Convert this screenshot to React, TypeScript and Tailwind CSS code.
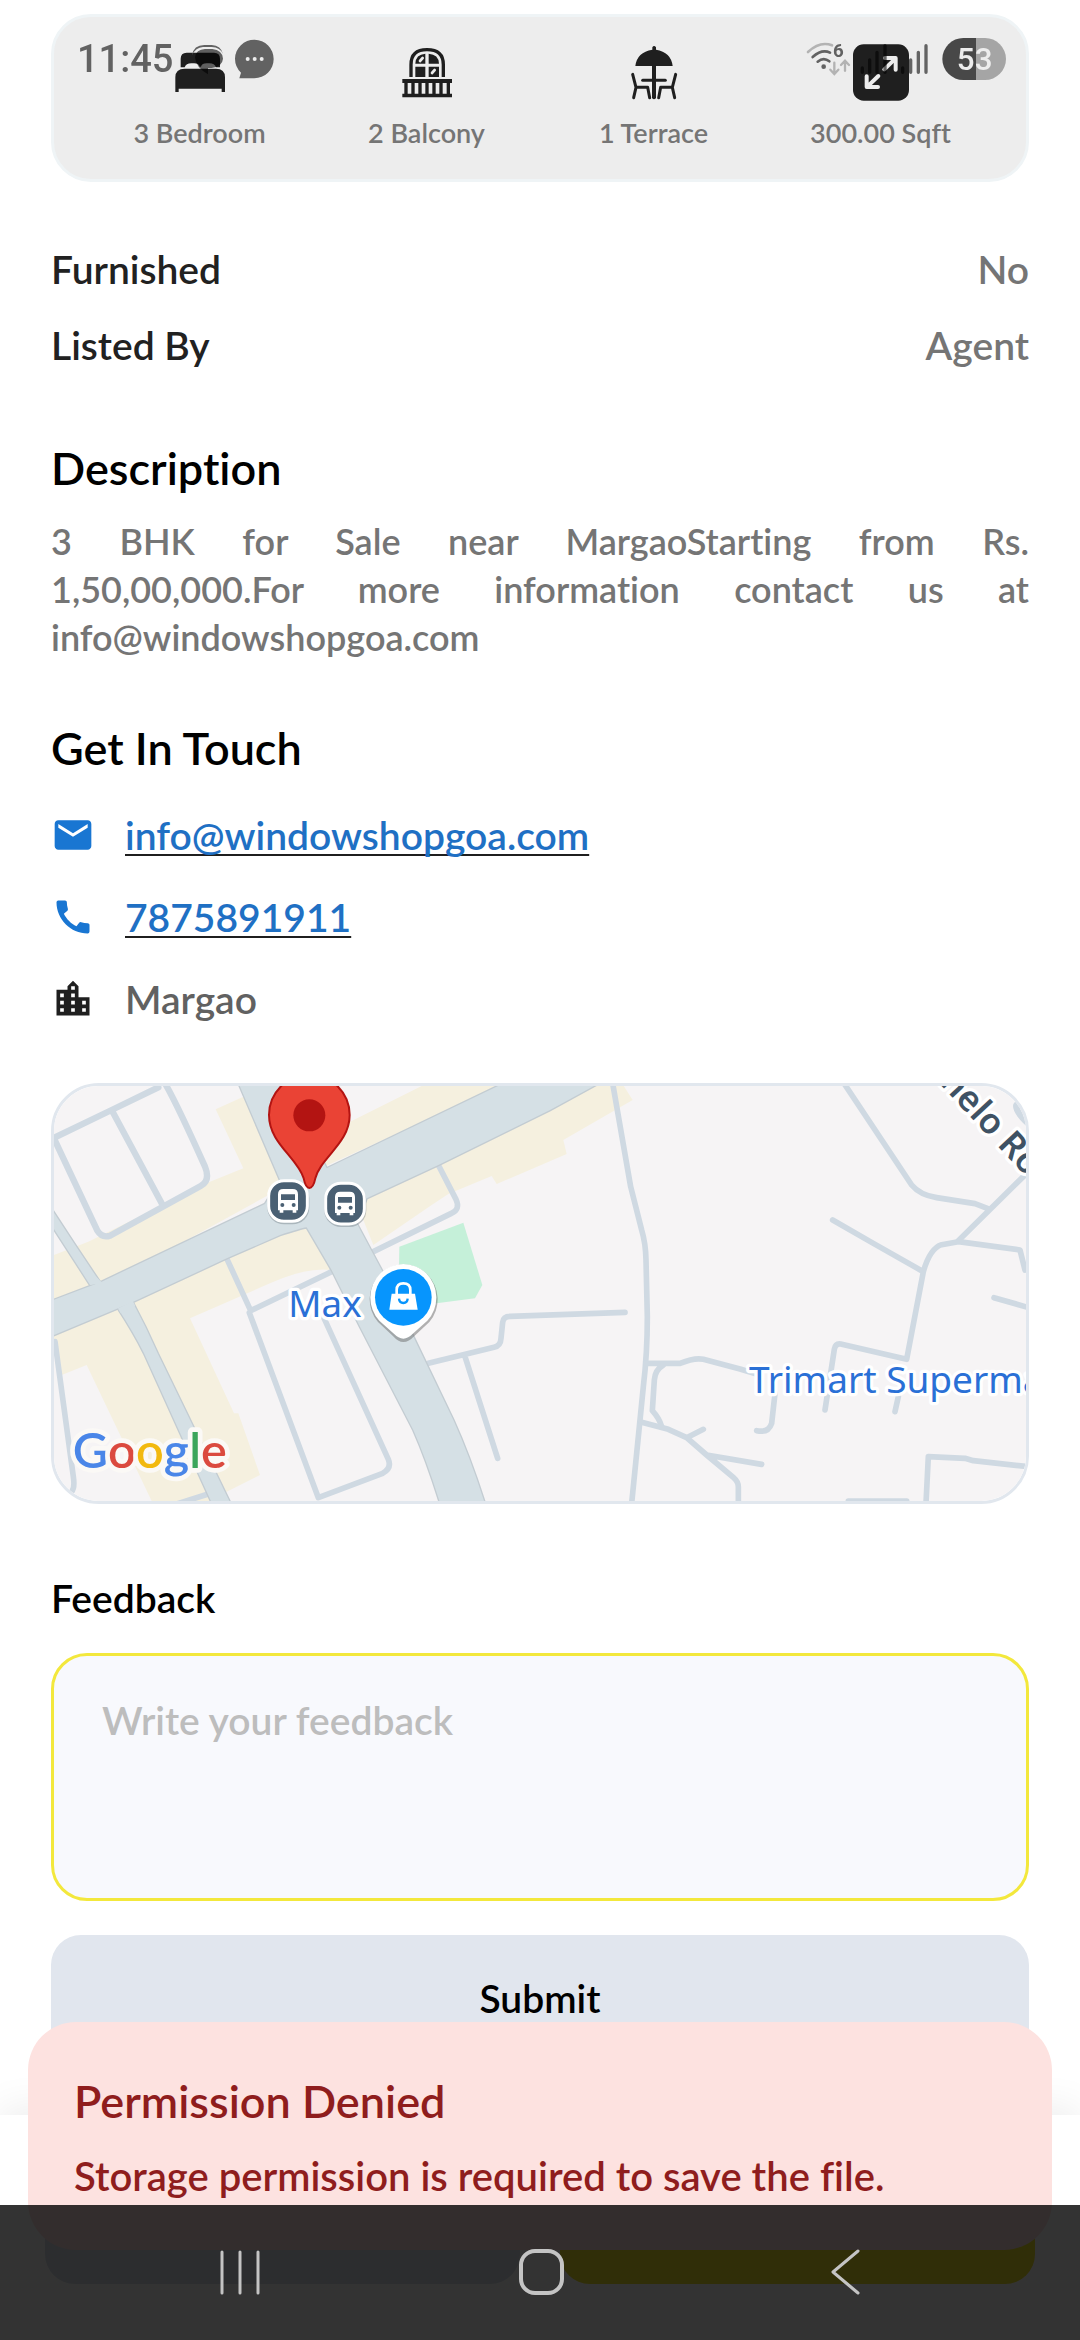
import type { ReactNode } from "react";
import { MdCall, MdEmail, MdLocationCity } from "react-icons/md";

function BedIcon() {
  return (
    <svg viewBox="38 48 168 168" className="size-14 overflow-visible" fill="#1f1f1f" aria-hidden="true">
      <path d="M64 112 V86 Q64 68 82 68 H164 Q182 68 182 86 V112 H170 Q166 100 150 100 H142 Q128 100 125 110 H121 Q118 100 104 100 H96 Q80 100 76 112Z" />
      <path d="M48 186 V142 Q48 116 76 116 H170 Q197 116 197 142 V186 H187 V176 H58 V186Z" />
    </svg>
  );
}

function BalconyIcon() {
  return (
    <svg viewBox="26 18 168 168" className="size-14 overflow-visible" fill="#1f1f1f" aria-hidden="true">
      <path d="M62 111 V74 Q62 29 110 29 Q159 29 159 74 V111" fill="none" stroke="#1f1f1f" strokeWidth="10" />
      <path d="M75 71 Q76 43 105 41 V71Z M115 41 Q145 43 146 71 H115Z M75 80 H105 V111 H75Z M115 80 H146 V111 H115Z" />
      <path d="M89 63 L97 54 M125 99 L133 90" stroke="#ededed" strokeWidth="8" strokeLinecap="round" />
      <path d="M36 117 H185 V129 H36Z M36 161 H185 V172 H36Z" />
      <path d="M47 128 V162 M68 128 V162 M89 128 V162 M110 128 V162 M131 128 V162 M152 128 V162 M174 128 V162" stroke="#1f1f1f" strokeWidth="10" />
    </svg>
  );
}

function TerraceIcon() {
  return (
    <svg viewBox="705 18 168 168" className="size-14 overflow-visible" fill="none" stroke="#1f1f1f" strokeWidth="9" strokeLinecap="round" strokeLinejoin="round" aria-hidden="true">
      <path d="M733 78 Q738 36 784 29 V22 Q789 14 795 22 V29 Q840 36 845 78Z" fill="#1f1f1f" stroke="none" />
      <path d="M789 76 V172" strokeWidth="12" />
      <path d="M755 121 H823" />
      <path d="M725 103 L735 142 L728 173 M735 142 H770 L776 173" />
      <path d="M854 103 L844 142 L851 173 M844 142 H809 L803 173" />
    </svg>
  );
}

function AreaIcon() {
  return (
    <svg viewBox="153 48 168 168" className="size-14 overflow-visible" aria-hidden="true">
      <rect x="153" y="43" width="168" height="169" rx="32" fill="#1f1f1f" />
      <path d="M247 118 L280 86 M249 84 H281 V119 M229 138 L196 170 M194 139 V171 H228" fill="none" stroke="#ededed" strokeWidth="12" strokeLinecap="round" strokeLinejoin="round" />
    </svg>
  );
}

const facilities: { label: string; icon: ReactNode }[] = [
  { label: "3 Bedroom", icon: <BedIcon /> },
  { label: "2 Balcony", icon: <BalconyIcon /> },
  { label: "1 Terrace", icon: <TerraceIcon /> },
  { label: "300.00 Sqft", icon: <AreaIcon /> },
];

function StatusBar() {
  return (
    <div className="pointer-events-none fixed inset-x-0 top-0 z-30 flex items-center justify-between pt-9 pr-[73px] pl-[77px]">
      <div className="flex items-center gap-[18px]">
        <span className="font-['Roboto',sans-serif] text-[38px] leading-[46px] font-medium text-[#626262]">11:45</span>
        <svg viewBox="90 20 252 138" className="h-[46px] w-[84px]" aria-hidden="true">
          <path d="M93 78 Q98 47 130 47 H152 Q180 49 186 74 Q178 54 152 53 H126 Q104 54 93 78Z" fill="#626262" />
          <path d="M102 84 Q105 60 132 59 H154 Q184 62 186 88 Q184 112 152 116 H141 V135 Q104 114 102 84Z" fill="#000" opacity="0.6" />
          <path d="M235 147 L240 130 Q222 112 222 88 A58 58 0 1 1 280 147Z" fill="#626262" />
          <circle cx="260" cy="89" r="6" fill="#ededed" />
          <circle cx="281" cy="89" r="6" fill="#ededed" />
          <circle cx="302" cy="89" r="6" fill="#ededed" />
        </svg>
      </div>
      <svg viewBox="18 18 603 138" className="h-[46px] w-[201px]" aria-hidden="true">
        <g fill="none" strokeLinecap="round">
          <path d="M24 66 Q60 32 96 46" stroke="#b3b3b3" strokeWidth="8" />
          <path d="M38 81 Q66 56 90 68" stroke="#626262" strokeWidth="8" />
          <path d="M53 95 Q71 80 88 94" stroke="#626262" strokeWidth="8" />
          <path d="M103 98 V130 M91 119 L103 132 L115 119 M135 122 V93 M123 105 L135 92 L147 105" stroke="#b3b3b3" strokeWidth="7" />
          <path d="M187 114 V127 M209 90 V127 M231 67 V127 M255 47 V127 M308 114 V127 M332 90 V127 M355 67 V127 M378 47 V127" stroke="#000" strokeOpacity="0.58" strokeWidth="10" />
        </g>
        <circle cx="71" cy="110" r="7" fill="#626262" />
        <text x="99" y="81" fontFamily="Roboto, sans-serif" fontSize="56" fontWeight="700" fill="#626262">6</text>
        <path d="M528 24 H490 A63 63 0 0 0 490 150 H528Z" fill="#484848" />
        <path d="M528 24 H555 A63 63 0 0 1 555 150 H528Z" fill="#a5a5a5" />
        <text x="524" y="121" textAnchor="middle" fontFamily="Roboto, sans-serif" fontSize="94" fontWeight="500" fill="#ededed">53</text>
      </svg>
    </div>
  );
}

function BusStop({ x, y }: { x: number; y: number }) {
  return (
    <g transform={`translate(${x} ${y})`}>
      <rect x="-62" y="-58" width="126" height="128" rx="50" fill="#5b6670" opacity="0.35" />
      <rect x="-58" y="-61" width="116" height="122" rx="46" fill="#4a6073" stroke="#fff" strokeWidth="9" />
      <path d="M-30 28 V-20 Q-30 -36 -14 -36 H14 Q30 -36 30 -20 V28 H25 V35 H14 V28 H-14 V35 H-25 V28Z" fill="#fff" />
      <path d="M-21 -20 H21 V-3 H-21Z" fill="#4a6073" />
      <circle cx="-17" cy="12" r="6" fill="#4a6073" />
      <circle cx="17" cy="12" r="6" fill="#4a6073" />
    </g>
  );
}

const MAIN_ROAD =
  "M625 38 L750 330 L705 402 L215 635 L60 694 V800 L300 700 L590 565 L750 495 Q810 475 830 472 L905 600 L990 770 L1150 1080 Q1190 1170 1232 1305 H1366 Q1320 1160 1270 1050 L1150 800 L1055 600 L980 460 L1010 385 L1225 285 L1560 120 L1710 38 H1425 L890 295 L880 275 L780 38Z";
const SIDE_ROADS =
  "M60 406 Q140 530 215 640 L180 648 L60 462Z M262 716 Q310 790 340 850 L546 1305 H606 L385 850 Q350 770 310 696Z";

function LocationMap() {
  return (
    <svg viewBox="72 48 2916 1245" preserveAspectRatio="xMidYMid slice" className="block h-[415px] w-full" role="img" aria-label="Map of Margao">
      <rect x="0" y="0" width="3100" height="1400" fill="#f6f4f5" />
      <g fill="#f5f0df">
        <path d="M60 560 L175 515 L540 335 L640 295 L557 118 L640 80 L780 340 L215 650 L60 700Z" />
        <path d="M860 300 L935 168 L1195 38 H1440Z" />
        <path d="M980 400 L1560 110 L1690 38 H1775 L1808 90 L1600 210 L1610 252 L1400 342 L1385 318 L1255 372 L1205 405 L1030 525Z" />
        <path d="M280 690 L590 555 L830 465 L905 600 Q830 590 720 640 L480 745 L612 1030 L625 1030 L690 1215 L535 1293 H365 L170 885 L95 915 L60 780Z" />
      </g>
      <path d="M1108 530 L1300 458 L1357 645 L1335 685 L1105 715Z" fill="#c5f0d9" />
      <g fill="none" stroke="#cfd9e2" strokeWidth="19" strokeLinecap="round" strokeLinejoin="round">
        <path d="M75 202 L245 120 L385 52 M405 40 Q440 100 525 290 Q542 332 512 348 L240 497 Q216 505 202 482 L75 212 M245 120 L395 400" />
        <path d="M590 565 L662 722 L905 605 M658 728 L865 1283 L1058 1210 Q1086 1195 1075 1168 L880 740" strokeWidth="17" />
        <path d="M1225 285 L1278 388 Q1292 418 1264 430 L1030 545" strokeWidth="17" />
        <path d="M1195 880 L1392 832 Q1412 827 1413 805 L1418 757 Q1420 739 1440 739 L1785 727 M1305 860 L1403 1165" strokeWidth="17" />
        <path d="M75 815 L130 1220 Q135 1255 125 1265 M440 1302 L535 1272" strokeWidth="17" />
      </g>
      <g fill="none" stroke="#cfd9e2" strokeWidth="17" strokeLinecap="round" strokeLinejoin="round" transform="translate(1530 0)">
        <path d="M218 40 L272 350 L305 480 Q317 520 318 570 L322 740 Q322 850 310 950 L275 1300" />
        <path d="M912 40 L1115 345 Q1140 375 1190 383 L1305 401 L1342 415 M1465 305 L1255 512" />
        <path d="M878 450 L1000 520 L1150 605 Q1170 535 1205 524 L1255 515 L1440 540 L1455 600 M1150 605 L1100 868 L902 822 Q886 820 883 838 L855 1020" />
        <path d="M1075 980 L1065 1025 M1362 683 L1470 714" />
        <path d="M318 880 H420 Q465 862 490 868 L600 897 L650 912 M705 970 L695 1060 Q685 1090 650 1082" />
        <path d="M370 885 Q345 900 343 930 L337 1022 Q358 1045 365 1070" />
        <path d="M305 1057 L385 1078 L440 1103 L500 1155 L580 1222 Q595 1235 595 1250 V1300 M440 1103 L490 1078 M500 1155 L665 1183" />
        <path d="M1158 1300 L1165 1160 L1275 1165 L1300 1172 L1465 1190 M925 1293 H1100" />
        <path d="M1434 108 Q1434 125 1470 158" strokeWidth="30" />
      </g>
      <path d={MAIN_ROAD} fill="none" stroke="#c3ccd2" strokeWidth="8" />
      <path d={SIDE_ROADS} fill="#d5e0e5" stroke="#c3ccd2" strokeWidth="4" />
      <path d={MAIN_ROAD} fill="#d5e0e5" />
      <path d="M192 625 L220 652 M268 722 L312 700" stroke="#d5e0e5" strokeWidth="16" />

      <BusStop x={774} y={393} />
      <BusStop x={945} y={401} />

      <path d="M838 354 Q827 354 821 325 C802 262 717 220 717 135 A121 121 0 0 1 959 135 C959 220 872 262 856 325 Q850 354 838 354Z" fill="#ea4335" stroke="#b31412" strokeWidth="6" />
      <circle cx="838" cy="136" r="48" fill="#b31412" />

      <path d="M1120 816 Q1105 816 1088 797 L1044 756 A102 104 0 1 1 1198 756 L1154 797 Q1136 816 1120 816Z" fill="#6b6b6b" opacity="0.5" />
      <path d="M1120 806 Q1106 806 1090 790 L1048 752 A99 101 0 1 1 1192 752 L1150 790 Q1134 806 1120 806Z" fill="#fff" />
      <circle cx="1120" cy="682" r="85" fill="#0795fd" />
      <path d="M1085 671 H1155 L1163 719 H1078Z" fill="#fff" />
      <path d="M1100 675 V660 Q1100 640 1120 640 Q1141 640 1141 660 V675" fill="none" stroke="#fff" strokeWidth="8" />
      <path d="M1107 686 Q1108 699 1120 699 Q1132 699 1133 686" fill="none" stroke="#0795fd" strokeWidth="7" />

      <g fontFamily="'Noto Sans', sans-serif" fontWeight="400" stroke="#fff" strokeWidth="20" strokeLinejoin="round" paintOrder="stroke">
        <text x="775" y="742" fontSize="110" fill="#2a70d6">Max</text>
        <text x="2157" y="968" fontSize="111" fill="#2a70d6">Trimart Supermarket</text>
        <text transform="translate(2727 40) rotate(47)" fontSize="106" fontWeight="600" fill="#3f5264">nelo Road</text>
      </g>
      <text x="128" y="1195" fontFamily="Lato, sans-serif" fontSize="146" fontWeight="600" stroke="#fbf9f6" strokeWidth="28" strokeLinejoin="round" paintOrder="stroke">
        <tspan fill="#4a86e8">G</tspan>
        <tspan fill="#db4a3f">o</tspan>
        <tspan fill="#f2b90f">o</tspan>
        <tspan fill="#4a86e8">g</tspan>
        <tspan fill="#3ba55b">l</tspan>
        <tspan fill="#db4a3f">e</tspan>
      </text>
    </svg>
  );
}

function PermissionToast() {
  return (
    <div role="alert" className="fixed inset-x-7 bottom-[90px] z-20 rounded-[48px] bg-[#fde2e0] px-[46px] pt-[53px] pb-[51px] text-[#8f1d1d]">
      <p className="text-[45px] leading-[52px]">Permission Denied</p>
      <p className="mt-[26px] text-[40px] leading-[46px]">Storage permission is required to save the file.</p>
    </div>
  );
}

function ActionSheet() {
  return (
    <div className="fixed inset-x-0 bottom-0 z-10 flex gap-10 bg-white px-[45px] pt-[43px] pb-14 shadow-[0_-8px_36px_rgba(0,0,0,0.07)]">
      <button type="button" aria-label="Call" className="h-[126px] flex-1 rounded-[30px] bg-[#dbe2ea]" />
      <button type="button" aria-label="Enquire" className="h-[126px] flex-1 rounded-[30px] bg-[#f0e328]" />
    </div>
  );
}

function NavigationBar() {
  return (
    <nav className="fixed inset-x-0 bottom-0 z-30 grid h-[135px] grid-cols-3 items-center bg-black/80 px-[88px]">
      <button type="button" aria-label="Recent apps" className="flex justify-center">
        <svg viewBox="0 0 48 48" className="size-12" stroke="#c4c4c4" strokeWidth="3" strokeLinecap="round" aria-hidden="true">
          <path d="M7 3 V44 M25 3 V44 M43 3 V44" />
        </svg>
      </button>
      <button type="button" aria-label="Home" className="flex justify-center">
        <svg viewBox="0 0 48 48" className="size-12" fill="none" stroke="#c4c4c4" strokeWidth="4" aria-hidden="true">
          <rect x="5" y="2" width="41" height="42" rx="14" />
        </svg>
      </button>
      <button type="button" aria-label="Back" className="flex justify-center">
        <svg viewBox="0 0 48 48" className="size-12" fill="none" stroke="#c4c4c4" strokeWidth="3" strokeLinecap="round" strokeLinejoin="round" aria-hidden="true">
          <path d="M41 2 L16 23 L41 44" />
        </svg>
      </button>
    </nav>
  );
}

export default function App() {
  return (
    <div className="min-h-screen bg-white font-['Lato',sans-serif] text-[39px] leading-[44px] font-semibold text-[#757575] [font-variant-ligatures:none]">
      <StatusBar />
      <main className="px-[51px] pt-[14px] pb-[280px]">
        <ul className="grid grid-cols-4 rounded-[40px] border-3 border-[#eff4f6] bg-[#ededed] px-8 pt-[29px] pb-[30px]">
          {facilities.map((facility) => (
            <li key={facility.label} className="flex flex-col items-center gap-[15px] text-[27px] leading-8">
              {facility.icon}
              {facility.label}
            </li>
          ))}
        </ul>

        <dl className="mt-[65px] flex flex-col gap-8">
          <div className="flex justify-between">
            <dt className="text-[#212121]">Furnished</dt>
            <dd>No</dd>
          </div>
          <div className="flex justify-between">
            <dt className="text-[#212121]">Listed By</dt>
            <dd>Agent</dd>
          </div>
        </dl>

        <section className="mt-[75px]">
          <h2 className="text-[45px] leading-[52px] text-black">Description</h2>
          <p className="mt-[23px] text-[36px] leading-[48px]">
            <span className="block [text-align-last:justify]">3 BHK for Sale near MargaoStarting from Rs. </span>
            <span className="block [text-align-last:justify]">1,50,00,000.For more information contact us at </span>
            <span className="block">info@windowshopgoa.com</span>
          </p>
        </section>

        <section className="mt-[61px]">
          <h2 className="text-[45px] leading-[52px] text-black">Get In Touch</h2>
          <ul className="mt-[39px] flex flex-col gap-[38px]">
            <li className="flex items-center gap-[30px]">
              <MdEmail className="size-11 text-[#1976d2]" aria-hidden="true" />
              <a href="mailto:info@windowshopgoa.com" className="text-[#1f70c4] underline decoration-[#1f1f1f] decoration-2 underline-offset-4 [text-decoration-skip-ink:none]">
                info@windowshopgoa.com
              </a>
            </li>
            <li className="flex items-center gap-[30px]">
              <MdCall className="size-11 text-[#1976d2]" aria-hidden="true" />
              <a href="tel:7875891911" className="text-[#1f70c4] underline decoration-[#1f1f1f] decoration-2 underline-offset-4">
                7875891911
              </a>
            </li>
            <li className="flex items-center gap-[30px] text-[#616161]">
              <MdLocationCity className="size-11 text-[#1f1f1f]" aria-hidden="true" />
              Margao
            </li>
          </ul>
        </section>

        <div className="mt-[62px] overflow-hidden rounded-[48px] border-3 border-[#e1e7ee]">
          <LocationMap />
        </div>

        <form className="mt-[72px] flex flex-col" onSubmit={(event) => event.preventDefault()}>
          <label htmlFor="feedback" className="text-black">
            Feedback
          </label>
          <textarea
            id="feedback"
            placeholder="Write your feedback"
            className="mt-[33px] h-[248px] resize-none rounded-[36px] border-3 border-[#f3e83c] bg-[#f8f9fd] px-12 py-[42px] leading-[44px] outline-none placeholder:text-[#bdbdbd]"
          />
          <button type="submit" className="mt-[34px] h-[126px] rounded-[30px] bg-[#e1e6ee] text-black">
            Submit
          </button>
        </form>
      </main>
      <ActionSheet />
      <PermissionToast />
      <NavigationBar />
    </div>
  );
}
